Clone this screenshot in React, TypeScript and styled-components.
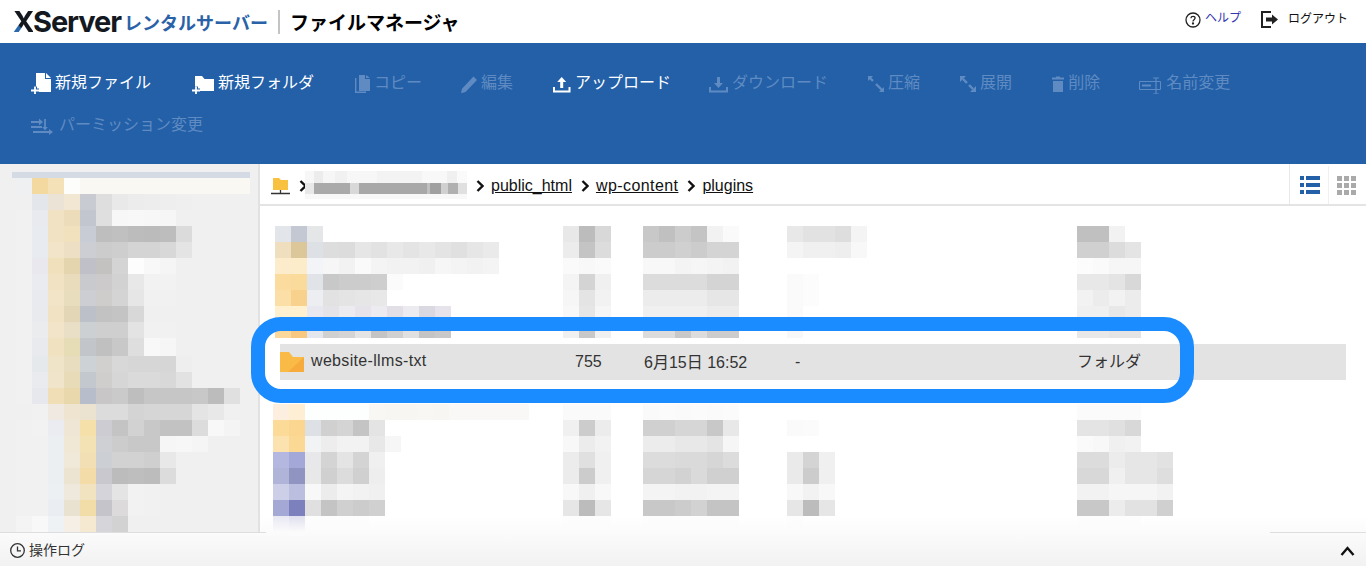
import React from "react";
import styled, { createGlobalStyle } from "styled-components";

const CJK = `"Liberation Sans", "Noto Sans CJK JP", sans-serif`;
const BLUE = "#2360a8";

const Global = createGlobalStyle`
  html, body { margin: 0; padding: 0; background: #fff; }
  body { font-family: ${CJK}; color: #333; }
  * { box-sizing: border-box; }
`;

const Page = styled.div`
  width: 1366px;
  height: 566px;
  display: flex;
  flex-direction: column;
  overflow: hidden;
`;

/* ---------- Header ---------- */
const Header = styled.header`
  height: 43px;
  flex: none;
  display: flex;
  align-items: center;
  padding: 0 18px 0 13px;
  background: #fff;
`;
const LogoWord = styled.span`
  font-family: Inter, sans-serif;
  font-weight: 700;
  font-size: 29px;
  letter-spacing: -1.07px;
  color: #14181f;
  line-height: 1;
`;
const LogoX = styled.span`
  background: linear-gradient(45deg, #2b69ad 0 34%, #14181f 36%);
  -webkit-background-clip: text;
  background-clip: text;
  color: transparent;
`;
const LogoSub = styled.span`
  margin-left: 3px;
  font-family: "Noto Sans CJK JP", sans-serif;
  font-weight: 700;
  font-size: 18px;
  color: #2a62a8;
`;
const TitleDivider = styled.span`
  width: 2px;
  height: 24px;
  margin: 0 10px;
  background: #c4c4c4;
`;
const AppTitle = styled.h1`
  margin: 0;
  font-family: "Noto Sans CJK JP", sans-serif;
  font-weight: 700;
  font-size: 19px;
  color: #000;
`;
const HeaderLinks = styled.nav`
  margin: 0 0 8px auto;
  display: flex;
  align-items: center;
`;
const HeaderLink = styled.a<{ $blue?: boolean }>`
  display: flex;
  align-items: center;
  font-size: 12px;
  margin-top: ${(p) => (p.$blue ? "-3px" : "-1px")};
  color: ${(p) => (p.$blue ? "#3434b4" : "#111")};
`;
const HelpIcon = styled.svg`
  margin: 4px 4px 0 0;
`;
const LogoutIcon = styled.svg`
  margin: 3px 9px 0 20px;
`;

/* ---------- Toolbar ---------- */
const Toolbar = styled.div`
  height: 121px;
  flex: none;
  background: ${BLUE};
  padding: 17px 90px 0 31px;
  display: flex;
  flex-wrap: wrap;
  column-gap: 38px;
  align-content: flex-start;
`;
const Tool = styled.button<{ $off?: boolean }>`
  height: 42px;
  padding: 0;
  border: 0;
  background: none;
  display: flex;
  align-items: center;
  font-family: ${CJK};
  font-size: 16px;
  color: ${(p) => (p.$off ? "#5f8bc2" : "#fff")};
`;
const GlyphSvg = styled.svg`
  margin-top: 1px;
`;
const Glyph = ({ w, children }: { w: number; children: React.ReactNode }) => (
  <GlyphSvg width={w} height={24} viewBox={`0 0 ${w} 24`} fill="currentColor" stroke="none">
    {children}
  </GlyphSvg>
);
const Plus = ({ x }: { x: number }) => (
  <g fill="none" strokeLinecap="butt">
    <path d={`M${x} 20.5h8M${x + 4} 16.5v8`} stroke={BLUE} strokeWidth={4} />
    <path d={`M${x} 20.5h8M${x + 4} 16.5v8`} stroke="#fff" strokeWidth={1.8} />
  </g>
);
const tools: { label: string; off?: boolean; w: number; icon: React.ReactNode }[] = [
  {
    label: "新規ファイル",
    w: 24,
    icon: (
      <>
        <path d="M5 3h9v6h6v13H5z" />
        <path d="M15 3l5 5h-5z" />
        <Plus x={0} />
      </>
    ),
  },
  {
    label: "新規フォルダ",
    w: 29,
    icon: (
      <>
        <path d="M6 6h7l2.5 3H25v12H6z" />
        <Plus x={3} />
      </>
    ),
  },
  {
    label: "コピー",
    off: true,
    w: 22,
    icon: (
      <>
        <path d="M7 5h6v4h5v12H7z" />
        <path d="M14 5l4 3h-4z" />
        <path d="M3.7 8v14.3H14" fill="none" stroke="currentColor" strokeWidth={1.4} />
      </>
    ),
  },
  {
    label: "編集",
    off: true,
    w: 21,
    icon: <path d="M13.5 6.5l3.5 3.5L5.5 22 1 23.3l1-4.6z" />,
  },
  {
    label: "アップロード",
    w: 24,
    icon: (
      <>
        <path d="M3 17v4.5h15.5V17" fill="none" stroke="currentColor" strokeWidth={2} />
        <path d="M10.7 7l4.5 5h-3v6h-3v-6h-3z" />
      </>
    ),
  },
  {
    label: "ダウンロード",
    off: true,
    w: 23,
    icon: (
      <>
        <path d="M1 17v4.5h17V17" fill="none" stroke="currentColor" strokeWidth={2} />
        <path d="M9.5 18l-4.5-5h3V7h3v6h3z" />
      </>
    ),
  },
  {
    label: "圧縮",
    off: true,
    w: 22,
    icon: (
      <>
        <path d="M3 7l4 4" fill="none" stroke="currentColor" strokeWidth={2.4} />
        <path d="M2 6h5l-5 5z" />
        <path d="M10 14l7 7" fill="none" stroke="currentColor" strokeWidth={2.4} />
        <path d="M18 22h-5l5-5z" />
      </>
    ),
  },
  {
    label: "展開",
    off: true,
    w: 22,
    icon: (
      <>
        <path d="M2 6h6l-6 6z" />
        <path d="M5 9l4 4" fill="none" stroke="currentColor" strokeWidth={2.4} />
        <path d="M18 22h-6l6-6z" />
        <path d="M15 19l-4-4" fill="none" stroke="currentColor" strokeWidth={2.4} />
      </>
    ),
  },
  {
    label: "削除",
    off: true,
    w: 18,
    icon: (
      <>
        <path d="M6 6.5h4v1h4v2H2v-2h4z" />
        <path d="M3 11h10v11H3z" />
      </>
    ),
  },
  {
    label: "名前変更",
    off: true,
    w: 28,
    icon: (
      <>
        <path d="M1.5 11.5h21v8h-21z" fill="none" stroke="currentColor" strokeWidth={1} />
        <path d="M4 15.5h9" fill="none" stroke="currentColor" strokeWidth={2} />
        <path d="M18 8v16M15 8h6M15 24h6" fill="none" stroke="currentColor" strokeWidth={1.2} />
      </>
    ),
  },
  {
    label: "パーミッション変更",
    off: true,
    w: 28,
    icon: (
      <>
        <path d="M0 10h10M0 15h11M14 7v9M2 20h17" fill="none" stroke="currentColor" strokeWidth={1.8} />
        <path d="M8 6.5l4 3.5-4 3.5zM11.2 15l2.8 3.5 2.8-3.5zM18 17l4 3-4 3z" />
      </>
    ),
  },
];

/* ---------- Body ---------- */
const Body = styled.main`
  flex: 1;
  min-height: 0;
  display: flex;
`;
const Sidebar = styled.aside`
  width: 260px;
  flex: none;
  background: #f0f0f0;
  border-right: 2px solid #e2e2e2;
  padding: 8px 0 0;
  overflow: hidden;
`;
const TreeHead = styled.div`
  width: 238px;
  height: 6px;
  margin-left: 12px;
  background: #d5dbe5;
`;
const BlockRow = styled.div<{ $tall?: boolean }>`
  display: flex;
  height: ${(p) => (p.$tall ? 18 : 16)}px;
  width: 234px;
  margin-left: 16px;
  overflow: hidden;
`;
const Block = styled.i<{ $c: string; $w?: number }>`
  display: block;
  flex: none;
  width: ${(p) => p.$w ?? 16}px;
  height: 100%;
  background: ${(p) => p.$c};
`;
const toHex = (s: string) => "#" + (s.length === 2 ? s + s + s : s);
const Blocks = ({ data }: { data: string }) => (
  <>
    {data
      .split(" ")
      .filter(Boolean)
      .map((c, i) => (
        <Block key={i} $c={toHex(c)} />
      ))}
  </>
);

const tree = [
  "eef0f2 f3d8a0 f4e1b8 fdfdfb faf8f3 faf8f3 faf8f3 faf8f3 faf8f3 faf8f3 faf8f3 faf8f3 faf8f3 faf8f3 faf8f3",
  "f0 e3e6ea eae3d6 f1e7d2 c9cbd2 de e9 ec ed ee ef",
  "f1 e8eaf0 f1e2c4 ecdcb9 c2c6cf df f7 f8 f7 f6 f0",
  "f1 e8ebf0 f1e2c4 f1e2bd c8ccd4 be c0 bc bb bd db f0",
  "f1 e8ebf0 f1e4c8 ecdfc4 ccced4 cc ce d4 d4 d8 e4 f0",
  "f1 e8e8ee f0e0bc e4d5ae c0c0c8 c4c1c1 d4 fd f8 f5 f0",
  "f1 e9ebf0 f0e2c2 e8dcbc c8cace cccaca d2 e8 f2 f2 f0",
  "f1 e8eaf0 f2e4c6 e8debe ccced3 cfcccc d4 e6 f1 f1 f0",
  "f1 e8eaee f0e2c2 e2d6b6 bcc0c8 c2 c4 d8 f0 f0 f0",
  "f1 ebecee f2e4c8 e8dfc6 cdd0d3 cf cf e3 f1 f1 f0",
  "f1 e8eaee f0e2c0 e6dcb6 c2c6cb c0 c8 de f8 f6 f0",
  "f1 e6e9ec efe3c8 e8ddbe cdd2d6 d2cfcf d8 d6 d6 d6 ee f0",
  "f1 e9ebee f0e4cb e8dcb8 c2c8ce d0cdcd d6 da da d8 e2 f0",
  "f1 e6e8ee f0dfb6 e8d8ac b8bdcc c8c6c6 ca be c6 c6 c6 c8 bc e0",
  "f0 f1 f0e9e2 efe4d0 ece2d0 dc dc d4 d6 d6 d6 e4 e8 f0",
  "f1 f2 ebebf2 efe6d6 f5e0aa ccccd2 c4 d2 c8 c2 c2 dc f8 f4",
  "f1 f1 ebeff2 f0e7d4 f3e2b4 cfd0d4 cc c8 c8 f6 f7 f5 f0",
  "f1 f1 ebeff2 f0e8d8 f2e0b4 ccd0d4 d2 d2 cf e8 f0 f0",
  "f1 f1 ebeff2 ece4d0 f3dca8 c8c8ce bc be bc dc f0 f0",
  "f1 f1 ecf0f3 efe8dc f1e3c0 d4d4da e4 f2 f1 f0",
  "f1 f1 eaeef2 e9e2d0 f2dca8 c4c4ca dcdada f2 f1 f0",
  "f4 f8 eff2f5 f5efe6 f6e9d2 d6d6da d2 f0 f0",
];

const Content = styled.section`
  flex: 1;
  min-width: 0;
  position: relative;
  background: #fff;
`;
const Crumbs = styled.div`
  height: 42px;
  border-bottom: 2px solid #e4e4e4;
  display: flex;
  align-items: center;
  padding: 4px 0 0 11px;
  font-size: 16px;
  color: #111;
`;
const CrumbLink = styled.a<{ $track?: boolean }>`
  color: #111;
  text-decoration: underline;
  letter-spacing: ${(p) => (p.$track ? "0.42px" : "0")};
`;
const Chevron = styled.svg`
  flex: none;
  margin: 0 7px 0 9px;
`;
const Blur = styled.div`
  width: 162px;
  height: 28px;
  margin: -3px 0 0 -9px;
  display: flex;
  flex-direction: column;
`;
const BlurRow = styled.div<{ $h: number }>`
  height: ${(p) => p.$h}px;
  display: flex;
`;
const ViewToggle = styled.div`
  margin: -4px 0 0 auto;
  width: 77px;
  height: 40px;
  border-left: 1px solid #e8e8e8;
  padding: 2px 0 0 10px;
  display: flex;
  align-items: center;
`;
const GridIcon = styled.svg`
  margin-left: 8px;
`;
const Vertical = styled.span`
  width: 1px;
  height: 38px;
  margin-left: 8px;
  background: #f0f0f0;
`;

const List = styled.div`
  padding: 20px 0 0 15px;
`;
const Columns = styled.div`
  display: grid;
  grid-template-columns: 288px 80px 144px 290px 1fr;
`;
const MosaicRow = styled(Columns)`
  height: 16px;
`;
const Cell = styled.div<{ $shift?: boolean }>`
  display: flex;
  height: 100%;
  margin-left: ${(p) => (p.$shift ? "-2px" : "0")};
`;
const MosaicLines = ({ rows, shift }: { rows: string[][]; shift?: boolean }) => (
  <>
    {rows.map((r, i) => (
      <MosaicRow key={i}>
        <Cell $shift={shift}>
          <Blocks data={r[0]} />
        </Cell>
        <Cell>
          <Blocks data={r[1]} />
        </Cell>
        <Cell>
          <Blocks data={r[2]} />
        </Cell>
        <Cell>
          <Blocks data={r[3]} />
        </Cell>
        <Cell>
          <Blocks data={r[4]} />
        </Cell>
      </MosaicRow>
    ))}
  </>
);

const above: string[][] = [
  ["e2e6ea c4c8d2 e4e6e8", "e8 bc d8", "c8 c0 cc c4 f2 fa", "e8 e2 e2 de f4", "c0 c0 f2"],
  ["f0dfbe dcc79a dde1e6 dd dc e6 e2 e8 e4 e8 e4 e0 e6 ea", "ec c4 dc", "cc cc d0 cc d4 d4", "f4 f0 f0 ee f8", "d0 d0 dc e4"],
  ["fdeccb fdecc9 f2f4f8 f6 f2 fa f4 f2 f2 f0 f6 f4 f2 f4", "fa f8 fa", "f8 f8 f4 f6 f4 f2", "ff", "fc fa f6 f6"],
  ["fbdc9e fbdb9c e0e4e8 c8 cc cc ce fb", "f4 d4 f0", "dc dc dc dc d4 d4", "fa fc", "e8 e8 e4 d8"],
  ["fcdfa6 f8d28c eceef2 e2 e4 e6 e8", "f6 e4 f2", "ec ec ec ec e6 e6", "fa fc", "f2 ec f2 ec"],
  ["fff0d0 fff0cf e8e8f0 e4e4e8 ecebef e6e4ea ecebef e2dfe6 ecebef dad8e0 e6e4ea", "f8 e6 f6", "f0 f0 f0 f0 ec ec", "fa", "f0 f0 e8 ec"],
  ["fad79a f8c880 e4e6ee d0 d4 e4 c4 d0 e0 c4 c8", "f0 c8 f0", "dc dc c8 dc cc cc", "f8", "e8 e8 e4 e4"],
];
const below: string[][] = [
  ["fcefe0 fdeed4 fdfefe fdfefe fdfefe fdfefe f8f7f4 f7f6f3 f7f6f3 f8f7f4 f7f6f3 f9f8f6 f9f8f6 f9f8f6 f9f8f6 f9f8f6", "fa fa fa", "fa fb fa fb fa fb", "ff", "fb fb fb fb"],
  ["fcdb99 fbd690 dde1e5 d0 d4 c4 e4", "f0 cc ec", "d0 d0 d6 d6 c8 e8", "fa fb", "e4 e4 e0 d8"],
  ["fce2ae fbd995 f2f3f4 ed f2 f2 e8 f6", "f8 ec f2", "ec ec e8 e8 e4 f6", "ff", "fa f8 f0 f2"],
  ["b4b8e0 a4a8d8 e8e8ea d4 e4 d4 f0", "ec e0 f0", "dc dc da da d6 dc", "ea d4 f0", "dc dc ec e6 e6 e2"],
  ["b0b4d8 9094c0 e8 d0 dc d0 ee", "ec cc f0", "d6 d6 d2 da d0 d0", "ea cc f0", "d8 d8 f0 e6 e6 de"],
  ["cdcfe8 bcbee0 f8 ec f4 f2 f0", "f8 f0 f8", "f4 f4 f2 f2 f4 f4", "f8 f2 f8", "f2 f2 f6 f6 f6 f2"],
  ["a4a8d4 7c80bc e0 c4 d0 cc d0", "e6 bc e6", "c8 c8 cc d2 c4 c4", "e6 bc e6", "c8 c8 ec e2 e2 d0"],
  ["e8e8f4 dfdfef fd fd fd fd", "fd fd fd", "fd fd fd fd fd fd", "fd", "fd fd fd fd"],
];

const FileRow = styled(Columns)`
  position: relative;
  height: 36px;
  width: 1066px;
  margin: 6px 0 24px 5px;
  background: #e3e3e3;
  grid-template-columns: 283px 80px 144px 290px 1fr;
  align-items: center;
  font-size: 16px;
  color: #333;
`;
const NameCell = styled.div`
  display: flex;
  align-items: center;
  gap: 7px;
`;
const FileName = styled.span`
  margin-top: -2px;
  letter-spacing: 0.33px;
`;
const TextCell = styled.span<{ $pad: number; $lift?: number }>`
  padding-left: ${(p) => p.$pad}px;
  margin-top: ${(p) => -(p.$lift ?? 0)}px;
`;
const Ring = styled.div`
  position: absolute;
  left: -29px;
  top: -27px;
  width: 943px;
  height: 86px;
  border: 14.5px solid #1a8cff;
  border-radius: 30px;
  pointer-events: none;
`;
const FooterFade = styled.div`
  position: absolute;
  left: 0;
  right: 0;
  bottom: 0;
  height: 16px;
  background: linear-gradient(rgba(255, 255, 255, 0), #fbfbfb);
  pointer-events: none;
`;

const Footer = styled.footer`
  position: relative;
  flex: none;
  height: 34px;
  display: flex;
  align-items: center;
  padding: 3px 11px 0 10px;
  background: linear-gradient(#fbfbfb, #f2f2f2);
  font-size: 14px;
  color: #333;
  &::before,
  &::after {
    content: "";
    position: absolute;
    top: 0;
    height: 1px;
    background: #dedede;
  }
  &::before {
    left: 0;
    width: 266px;
  }
  &::after {
    right: 0;
    width: 96px;
  }
`;
const ClockIcon = styled.svg`
  margin-right: 4px;
`;
const FooterLabel = styled.span`
  margin-top: -3px;
`;
const FooterChevron = styled.svg`
  margin-left: auto;
`;

const Arrow = () => (
  <Chevron width="8" height="12" viewBox="0 0 8 12" fill="none" stroke="#111" strokeWidth="2.4">
    <path d="M1.5 1l5 5-5 5" />
  </Chevron>
);

export default function App() {
  return (
    <Page>
      <Global />
      <Header>
        <LogoWord>
          <LogoX>X</LogoX>Server
        </LogoWord>
        <LogoSub>レンタルサーバー</LogoSub>
        <TitleDivider />
        <AppTitle>ファイルマネージャ</AppTitle>
        <HeaderLinks>
          <HelpIcon width="16" height="16" viewBox="0 0 16 16" fill="none" stroke="#222" strokeWidth="1.3">
            <circle cx="8" cy="8" r="7" />
            <path d="M5.9 6.2c.1-1.2 1-1.9 2.1-1.9 1.2 0 2.1.8 2.1 1.8 0 1.6-2.1 1.6-2.1 3.3" />
            <circle cx="8" cy="11.5" r=".5" fill="#222" />
          </HelpIcon>
          <HeaderLink $blue>ヘルプ</HeaderLink>
          <LogoutIcon width="18" height="17" viewBox="0 0 18 17" fill="#222">
            <path d="M10 1H1v15h9" fill="none" stroke="#222" strokeWidth="2" />
            <path d="M5 6.5h6v-3l6 5-6 5v-3H5z" />
          </LogoutIcon>
          <HeaderLink>ログアウト</HeaderLink>
        </HeaderLinks>
      </Header>

      <Toolbar>
        {tools.map((t) => (
          <Tool key={t.label} $off={t.off}>
            <Glyph w={t.w}>{t.icon}</Glyph>
            {t.label}
          </Tool>
        ))}
      </Toolbar>

      <Body>
        <Sidebar>
          <TreeHead />
          {tree.map((r, i) => (
            <BlockRow key={i} $tall={i === 10}>
              <Blocks data={r} />
            </BlockRow>
          ))}
        </Sidebar>

        <Content>
          <Crumbs>
            <svg width="19" height="18" viewBox="0 0 19 18">
              <path d="M2 1h6l2 2h7v10H2z" fill="#f8c13f" />
              <path d="M9.5 13v3M0 16.5h19" stroke="#333" strokeWidth="1.3" fill="none" />
            </svg>
            <Arrow />
            <Blur>
              <BlurRow $h={12}>
                <Block $c="#f7f7f7" $w={9} />
                <Block $c="#ececec" $w={9} />
                <Block $c="#f6f6f6" $w={12} />
                <Block $c="#f1f1f1" $w={12} />
                <Block $c="#f7f7f7" $w={30} />
                <Block $c="#f3f3f3" $w={45} />
                <Block $c="#f8f8f8" $w={25} />
                <Block $c="#f0f0f0" $w={10} />
                <Block $c="#fafafa" $w={10} />
              </BlurRow>
              <BlurRow $h={11}>
                <Block $c="#e8e8e8" $w={9} />
                <Block $c="#aaaaaa" $w={36} />
                <Block $c="#d8d8d8" $w={9} />
                <Block $c="#a8a8a8" $w={68} />
                <Block $c="#c0c0c0" $w={3} />
                <Block $c="#a0a0a0" $w={11} />
                <Block $c="#d0d0d0" $w={7} />
                <Block $c="#b0b0b0" $w={10} />
                <Block $c="#e0e0e0" $w={9} />
              </BlurRow>
              <BlurRow $h={5}>
                <Block $c="#f8f8f8" $w={162} />
              </BlurRow>
            </Blur>
            <Arrow />
            <CrumbLink>public_html</CrumbLink>
            <Arrow />
            <CrumbLink $track>wp-content</CrumbLink>
            <Arrow />
            <CrumbLink>plugins</CrumbLink>
            <ViewToggle>
              <svg width="20" height="19" viewBox="0 0 20 19" fill={BLUE}>
                <path d="M0 0h4v4H0zM6 0h14v4H6zM0 7h4v4H0zM6 7h14v4H6zM0 14h4v4H0zM6 14h14v4H6z" />
              </svg>
              <Vertical />
              <GridIcon width="19" height="19" viewBox="0 0 19 19" fill="#aaa">
                <path d="M0 0h5v5H0zM7 0h5v5H7zM14 0h5v5h-5zM0 7h5v5H0zM7 7h5v5H7zM14 7h5v5h-5zM0 14h5v5H0zM7 14h5v5H7zM14 14h5v5h-5z" />
              </GridIcon>
            </ViewToggle>
          </Crumbs>

          <List>
            <MosaicLines rows={above} />
            <FileRow>
              <NameCell>
                <svg width="24" height="20" viewBox="0 0 24 20">
                  <path d="M0 0h9l4 5h11v15H0z" fill="#f9bb45" />
                  <path d="M24 5v15H8z" fill="#f6ab3c" />
                </svg>
                <FileName>website-llms-txt</FileName>
              </NameCell>
              <TextCell $pad={12}>755</TextCell>
              <TextCell $pad={1} $lift={2}>6月15日 16:52</TextCell>
              <TextCell $pad={8}>-</TextCell>
              <TextCell $pad={0} $lift={4}>フォルダ</TextCell>
              <Ring />
            </FileRow>
            <MosaicLines rows={below} shift />
          </List>
          <FooterFade />
        </Content>
      </Body>

      <Footer>
        <ClockIcon width="15" height="15" viewBox="0 0 15 15" fill="none" stroke="#333" strokeWidth="1.3">
          <circle cx="7.5" cy="7.5" r="6.8" />
          <path d="M7.5 3.5v4.3H11" />
        </ClockIcon>
        <FooterLabel>操作ログ</FooterLabel>
        <FooterChevron width="15" height="10" viewBox="0 0 15 10" fill="none" stroke="#111" strokeWidth="2.4">
          <path d="M1.5 9L7.5 2l6 7" />
        </FooterChevron>
      </Footer>
    </Page>
  );
}
